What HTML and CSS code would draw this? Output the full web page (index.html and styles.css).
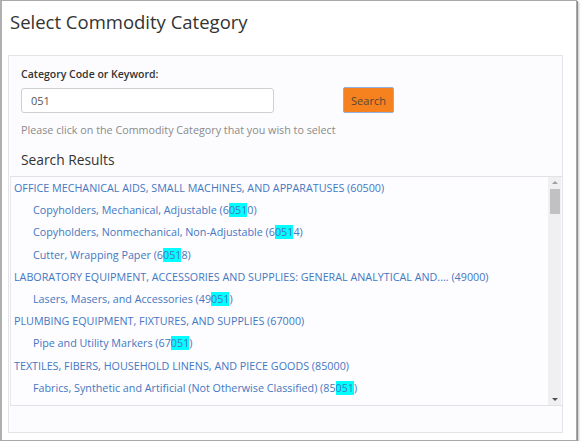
FILE: index.html
```html
<!DOCTYPE html>
<html>
<head>
<meta charset="utf-8">
<link rel="stylesheet" href="styles.css">
</head>
<body>
<div class="frame">
  <h1 class="title">Select Commodity Category</h1>
  <div class="panel">
    <div class="form">
      <label class="label">Category Code or Keyword:</label>
      <div class="search-row">
        <div class="input">051</div>
        <button class="btn">Search</button>
      </div>
      <p class="hint">Please click on the Commodity Category that you wish to select</p>
      <h2 class="results-title">Search Results</h2>
    </div>
    <div class="listbox">
      <ul class="items">
        <li class="parent">OFFICE MECHANICAL AIDS, SMALL MACHINES, AND APPARATUSES (60500)</li>
        <li class="child">Copyholders, Mechanical, Adjustable (6<mark>051</mark>0)</li>
        <li class="child">Copyholders, Nonmechanical, Non-Adjustable (6<mark>051</mark>4)</li>
        <li class="child">Cutter, Wrapping Paper (6<mark>051</mark>8)</li>
        <li class="parent">LABORATORY EQUIPMENT, ACCESSORIES AND SUPPLIES: GENERAL ANALYTICAL AND.... (49000)</li>
        <li class="child">Lasers, Masers, and Accessories (49<mark>051</mark>)</li>
        <li class="parent">PLUMBING EQUIPMENT, FIXTURES, AND SUPPLIES (67000)</li>
        <li class="child">Pipe and Utility Markers (67<mark>051</mark>)</li>
        <li class="parent">TEXTILES, FIBERS, HOUSEHOLD LINENS, AND PIECE GOODS (85000)</li>
        <li class="child">Fabrics, Synthetic and Artificial (Not Otherwise Classified) (85<mark>051</mark>)</li>
      </ul>
      <div class="scrollbar">
        <div class="arrow up"></div>
        <div class="track"><div class="thumb"></div></div>
        <div class="arrow down"></div>
      </div>
    </div>
    <div class="footer"></div>
  </div>
</div>
</body>
</html>
```
FILE: styles.css
```css
html, body {
  margin: 0;
  padding: 0;
  background: #ffffff;
}
body {
  font-family: "Open Sans", "Liberation Sans", sans-serif;
  color: #333333;
}
.frame {
  box-sizing: border-box;
  width: 577px;
  height: 441px;
  margin: 0;
  border: 1px solid #a8a8a8;
  border-left: 2px solid #b0b0b0;
  box-shadow: 1px 1px 0 #8c8c8c, 2px 2px 2px #c8c8c8;
  background: #ffffff;
  padding: 0 13px 0 6px;
}
.title {
  margin: 0;
  padding: 9px 0 0 2px;
  height: 54px;
  box-sizing: border-box;
  font-size: 18.5px;
  font-weight: 400;
  line-height: 24px;
  color: #333333;
}
.panel {
  box-sizing: border-box;
  height: 378px;
  border: 1px solid #e4e4e8;
  background: #fcfcfe;
  display: flex;
  flex-direction: column;
}
.form {
  padding: 11px 12px 0 12px;
}
.label {
  display: block;
  font-size: 10.5px;
  line-height: 14px;
  font-weight: 600;
  color: #333333;
  margin-bottom: 6px;
}
.search-row {
  display: flex;
  align-items: center;
  gap: 69px;
}
.input {
  box-sizing: border-box;
  width: 253px;
  height: 25px;
  border: 1px solid #cfcfcf;
  border-radius: 3px;
  background: #ffffff;
  font-size: 11px;
  line-height: 23px;
  padding-left: 9px;
  color: #555555;
}
.btn {
  box-sizing: border-box;
  width: 51px;
  height: 26px;
  margin: 0;
  padding: 0;
  border: 1px solid #8fb0e0;
  border-radius: 2px;
  background: #f5821f;
  font-family: "Open Sans", "Liberation Sans", sans-serif;
  font-size: 11px;
  color: #5a4636;
}
.hint {
  margin: 10px 0 0 0;
  font-size: 10.75px;
  line-height: 14px;
  color: #8a8a8a;
}
.results-title {
  margin: 14px 0 0 0;
  font-size: 13.8px;
  line-height: 18px;
  font-weight: 400;
  color: #333333;
  padding-bottom: 7px;
}
.listbox {
  box-sizing: border-box;
  height: 230px;
  margin-left: 1px;
  border-top: 1px solid #e2e2e6;
  border-bottom: 1px solid #e2e2e6;
  border-left: 1px solid #e8e8ec;
  background: #fdfcff;
  display: flex;
}
.items {
  flex: 1;
  list-style: none;
  margin: 0;
  padding: 0 0 0 3px;
  overflow: hidden;
}
.items li {
  font-size: 10.75px;
  line-height: 22.2px;
  color: #4378bf;
  white-space: nowrap;
}
.items .child {
  padding-left: 19px;
}
mark {
  background: #00ffff;
  color: #4378bf;
  padding: 0;
}
.scrollbar {
  width: 13px;
  margin-right: 1px;
  background: #f0f0f2;
  display: flex;
  flex-direction: column;
  align-items: center;
}
.arrow {
  height: 11px;
  width: 13px;
  display: flex;
  align-items: center;
  justify-content: center;
}
.arrow.up::before {
  content: "";
  border-left: 3px solid transparent;
  border-right: 3px solid transparent;
  border-bottom: 3px solid #a0a0a0;
}
.arrow.down::before {
  content: "";
  border-left: 3px solid transparent;
  border-right: 3px solid transparent;
  border-top: 3px solid #505050;
}
.track {
  flex: 1;
  width: 13px;
  display: flex;
  justify-content: center;
}
.thumb {
  width: 10px;
  height: 25px;
  margin-top: 1px;
  background: #c1c1c1;
}
.footer {
  flex: 1;
}
```
